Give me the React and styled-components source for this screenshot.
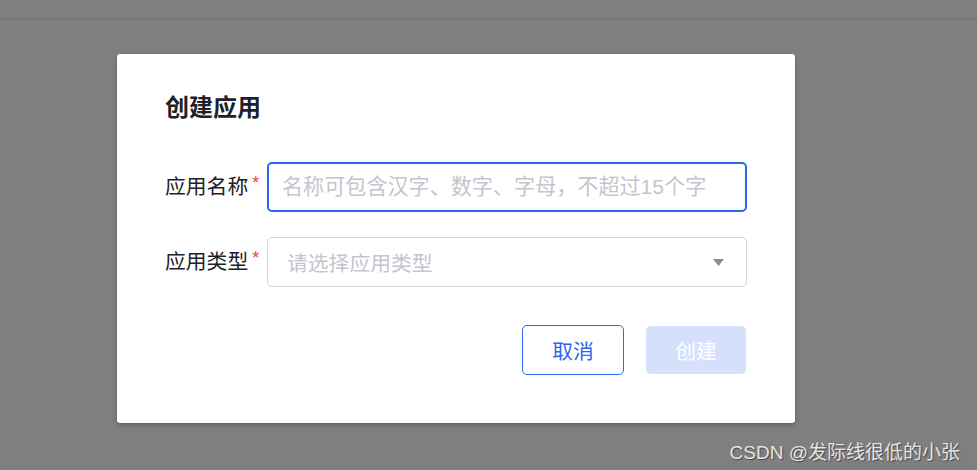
import React from 'react';
import styled, { createGlobalStyle } from 'styled-components';

const GlobalStyle = createGlobalStyle`
  html, body {
    margin: 0;
    padding: 0;
  }
  body {
    font-family: "Liberation Sans", "Noto Sans CJK SC", sans-serif;
  }
`;

export default function App() {
  return (
    <Page>
      <GlobalStyle />
      <TopBar />
      <Modal>
        <Title>创建应用</Title>
        <Form>
          <Row>
            <Label required>应用名称</Label>
            <TextInput placeholder="名称可包含汉字、数字、字母，不超过15个字" autoFocus />
          </Row>
          <Row>
            <Label required>应用类型</Label>
            <Select>
              <SelectPlaceholder>请选择应用类型</SelectPlaceholder>
              <svg width="11" height="7" viewBox="0 0 11 7">
                <path d="M0 0 H11 L5.5 7 Z" fill="#8c8c8c" />
              </svg>
            </Select>
          </Row>
        </Form>
        <Actions>
          <Btn>取消</Btn>
          <Btn primary disabled>创建</Btn>
        </Actions>
      </Modal>
      <Watermark>CSDN @发际线很低的小张</Watermark>
    </Page>
  );
}

const Page = styled.div`
  position: relative;
  width: 977px;
  height: 470px;
  background: #7f7f7f;
  overflow: hidden;
`;

const TopBar = styled.div`
  height: 18px;
  border-bottom: 2px solid #76767c;
`;

const Modal = styled.div`
  box-sizing: border-box;
  width: 678px;
  margin: 34px 0 0 117px;
  padding: 38px 48px 48px 48px;
  background: #fff;
  border-radius: 3px;
  box-shadow: 0 2px 4px rgba(0, 0, 0, 0.25);
`;

const Title = styled.div`
  font-family: "Liberation Sans", "Noto Sans CJK SC", sans-serif;
  font-size: 24px;
  font-weight: 700;
  line-height: 32px;
  color: #1d2129;
`;

const Form = styled.div`
  display: flex;
  flex-direction: column;
  gap: 25px;
  margin-top: 38px;
`;

const Row = styled.div`
  display: flex;
  align-items: center;
`;

const Label = styled.div`
  width: 102px;
  flex-shrink: 0;
  font-size: 20.8px;
  line-height: 28px;
  color: #1d2129;
  &::after {
    content: ${p => (p.required ? '"*"' : '""')};
    color: #f53f3f;
    font-size: 18px;
    position: relative;
    top: -5px;
    margin-left: 4px;
  }
`;

const TextInput = styled.input`
  box-sizing: border-box;
  width: 480px;
  height: 50px;
  padding: 0 13px;
  border: 2px solid #2d66f1;
  border-radius: 5px;
  outline: none;
  font-family: "Liberation Sans", "Noto Sans CJK SC", sans-serif;
  font-size: 21.1px;
  color: #1d2129;
  background: #fff;
  &::placeholder {
    color: #c3c6cc;
  }
`;

const Select = styled.div`
  box-sizing: border-box;
  width: 480px;
  height: 50px;
  padding: 0 22px 0 19px;
  border: 1px solid #d4d6da;
  border-radius: 5px;
  display: flex;
  align-items: center;
  justify-content: space-between;
`;

const SelectPlaceholder = styled.span`
  font-size: 20.8px;
  color: #c3c6cc;
`;

const Actions = styled.div`
  display: flex;
  justify-content: flex-end;
  align-items: center;
  gap: 22px;
  margin-top: 38px;
  padding-right: 1px;
`;

const Btn = styled.button`
  box-sizing: border-box;
  width: ${p => (p.primary ? '100px' : '102px')};
  height: ${p => (p.primary ? '48px' : '50px')};
  border-radius: 5px;
  font-family: "Liberation Sans", "Noto Sans CJK SC", sans-serif;
  font-size: 20.8px;
  cursor: pointer;
  border: ${p => (p.primary ? 'none' : '1px solid #2d66f1')};
  background: ${p => (p.primary ? '#d5e1fb' : '#fff')};
  color: ${p => (p.primary ? '#fff' : '#2d66f1')};
  padding: 0;
`;

const Watermark = styled.div`
  position: absolute;
  right: 17px;
  bottom: 6px;
  font-family: "Liberation Sans", "Noto Sans CJK SC", sans-serif;
  font-size: 19px;
  color: #e4e4e4;
  text-shadow: 1px 1px 1px rgba(0, 0, 0, 0.45);
`;
